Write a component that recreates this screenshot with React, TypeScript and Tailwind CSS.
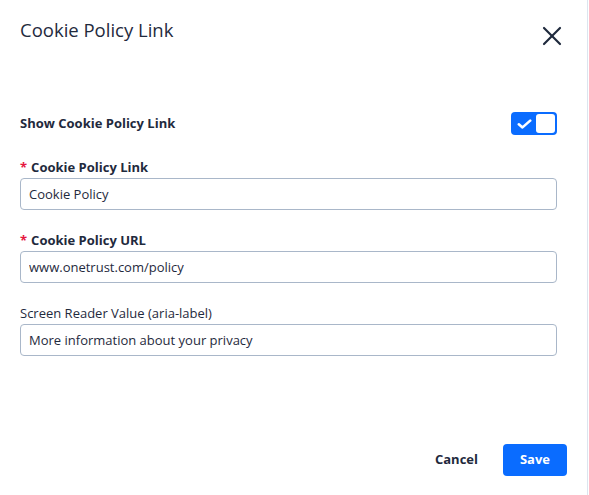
import { X } from 'lucide-react'

const font = { fontFamily: '"Open Sans", "Noto Sans", sans-serif' }

function Field({ label, value, required }: { label: string; value: string; required?: boolean }) {
  return (
    <div className="flex flex-col">
      <label className={`text-[13px] leading-[18px] text-[#1f2a3d] ${required ? 'font-bold' : ''}`}>
        {required && <span className="mr-1 text-[#e5173f]">*</span>}
        {label}
      </label>
      <input
        readOnly
        value={value}
        className="mt-[2px] h-[32px] w-full rounded-[4px] border border-[#a9b7c9] px-[8px] text-[13px] text-[#1f2a3d] outline-none"
      />
    </div>
  )
}

export default function App() {
  return (
    <div className="h-[495px] w-[589px] bg-white" style={font}>
      <div className="flex h-full w-[588px] flex-col border-r border-[#dce5ef]">
        <div className="flex items-start justify-between pl-[20px] pr-[19px] pt-[18px]">
          <h2 className="text-[18.5px] leading-[24px] text-[#1f2a3d]">Cookie Policy Link</h2>
          <X className="mt-[2px] h-[32px] w-[32px] text-[#1f2a3d]" strokeWidth={1.6} />
        </div>

        <div className="flex flex-col px-[20px] pr-[30px] pt-[60px]">
          <div className="flex items-center justify-between">
            <span className="text-[13px] font-bold text-[#1f2a3d]">Show Cookie Policy Link</span>
            <div className="flex h-[23px] w-[46px] items-center justify-between rounded-[4px] bg-[#0a6cff] pl-[6px] pr-[2px]">
              <svg viewBox="0 0 15 10" className="h-[10px] w-[15px]">
                <path d="M1.8 5.3 5.5 8.4 13.2 1.6" fill="none" stroke="white" strokeWidth="2.6" strokeLinecap="round" strokeLinejoin="round" />
              </svg>
              <div className="h-[19px] w-[19px] rounded-[3px] bg-white" />
            </div>
          </div>

          <div className="mt-[23px] flex flex-col gap-[21px]">
            <Field required label="Cookie Policy Link" value="Cookie Policy" />
            <Field required label="Cookie Policy URL" value="www.onetrust.com/policy" />
            <Field label="Screen Reader Value (aria-label)" value="More information about your privacy" />
          </div>
        </div>

        <div className="mt-auto flex items-center justify-end gap-[25px] pb-[19px] pr-[20px]">
          <button className="text-[13px] font-bold text-[#1f2a3d]">Cancel</button>
          <button className="h-[32px] w-[64px] rounded-[4px] bg-[#0a6cff] text-[13px] font-bold text-white">Save</button>
        </div>
      </div>
    </div>
  )
}
